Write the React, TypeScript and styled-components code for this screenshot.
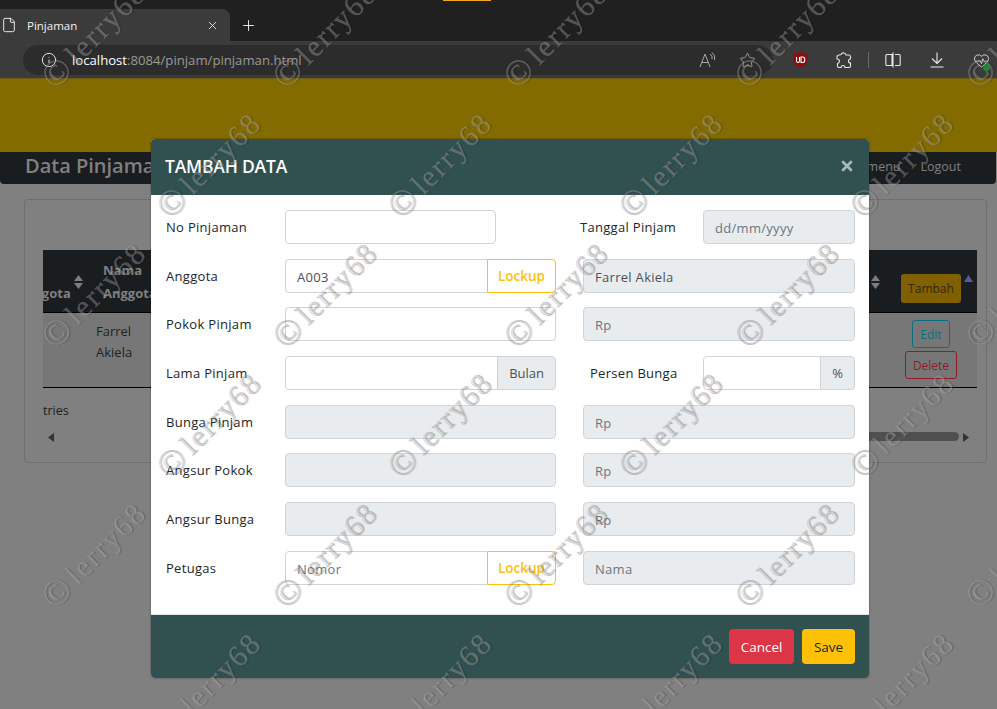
import React from 'react';
import styled, { createGlobalStyle } from 'styled-components';
import { File, HeartPulse, Info, Plus, Star, X } from 'lucide-react';

const GlobalStyle = createGlobalStyle`
  html, body {
    margin: 0;
    padding: 0;
    width: 997px;
    height: 709px;
    overflow: hidden;
    background: #808080;
    font-family: "Open Sans", "Liberation Sans", sans-serif;
  }
  * { box-sizing: border-box; }
`;

const Screen = styled.div`
  position: relative;
  width: 997px;
  height: 709px;
  overflow: hidden;
`;

/* browser chrome */
const TabStrip = styled.div`
  height: 41px;
  background: #202020;
  display: flex;
  align-items: flex-end;
  position: relative;
`;

const TopMark = styled.div`
  position: absolute;
  left: 443px;
  top: 0;
  width: 48px;
  height: 1px;
  background: #f0a818;
`;

const Tab = styled.div`
  width: 230px;
  height: 32px;
  background: #3b3b3b;
  border-radius: 0 8px 0 0;
  display: flex;
  align-items: center;
  padding: 0 11px 0 1px;
  color: #f2f2f2;
  font-size: 11.5px;
  gap: 10px;
  span { flex: 1; }
`;

const NewTab = styled.div`
  width: 36px;
  height: 32px;
  display: flex;
  align-items: center;
  justify-content: center;
  color: #f2f2f2;
`;

const Toolbar = styled.div`
  height: 37px;
  background: #3b3b3b;
  display: flex;
  align-items: flex-start;
  padding-top: 4px;
`;

const Address = styled.div`
  margin-left: 23px;
  width: 750px;
  height: 30px;
  background: #2c2c2c;
  border-radius: 15px;
  display: flex;
  align-items: center;
  padding-left: 18px;
  gap: 15px;
  font-size: 13.15px;
  b { font-weight: 400; color: #fff; }
  em { font-style: normal; color: #9a9a9a; }
  svg { color: #e4e4e4; }
`;

const ToolIcons = styled.div`
  position: absolute;
  top: 41px;
  left: 0;
  width: 997px;
  height: 37px;
  pointer-events: none;
`;

const ToolIcon = styled.div<{ $x: number }>`
  position: absolute;
  top: 10px;
  left: ${(p) => p.$x}px;
  width: 18px;
  height: 18px;
  color: #e4e4e4;
  display: flex;
  align-items: center;
  justify-content: center;
`;

const Divider = styled.div`
  position: absolute;
  left: 868px;
  top: 11px;
  width: 1px;
  height: 16px;
  background: #6a6a6a;
`;

const StatusDot = styled.div`
  position: absolute;
  right: 0;
  bottom: -2px;
  width: 7px;
  height: 7px;
  border-radius: 50%;
  background: #1f8a2c;
`;

/* dimmed page behind the dialog */
const Page = styled.div`
  height: 631px;
  background: #808080;
  color: #1c1c1c;
`;

const Banner = styled.div`
  height: 74px;
  background: #836b00;
  border-top: 1px solid #6e5c10;
`;

const Navbar = styled.div`
  height: 32px;
  margin-right: 1px;
  background: #1a1d20;
  border-radius: 0 0 4px 4px;
  display: flex;
  align-items: center;
  justify-content: space-between;
  padding: 0 35px 4px 25px;
  color: #808080;
`;

const Brand = styled.div`
  font-size: 20px;
  font-weight: 600;
  margin-top: -2px;
`;

const NavLinks = styled.div`
  display: flex;
  gap: 20px;
  font-size: 12.5px;
`;

const Card = styled.div`
  margin: 15px 10px 0 24px;
  height: 264px;
  border: 1px solid #6f6f6f;
  border-radius: 4px;
  padding: 50px 9px 0 18px;
`;

const TableFrame = styled.div`
  overflow: hidden;
  border-bottom: 1px solid #000;
`;

const HeadRow = styled.div`
  height: 63px;
  background: #1a1d20;
  border-bottom: 1px solid #000;
  display: flex;
  align-items: center;
  color: #808080;
  font-size: 13px;
  font-weight: 700;
  position: relative;
`;

const HeadCell = styled.div<{ $w: number; $ml?: number }>`
  width: ${(p) => p.$w}px;
  margin-left: ${(p) => p.$ml ?? 0}px;
  flex: none;
  line-height: 23px;
  padding-top: 1px;
  white-space: nowrap;
`;

const SortMark = styled.svg<{ $x: number }>`
  position: absolute;
  left: ${(p) => p.$x}px;
  top: 25px;
`;

const SortedMark = styled.svg`
  position: absolute;
  left: 921px;
  top: 25px;
`;

const TambahButton = styled.div`
  position: absolute;
  left: 858px;
  top: 24px;
  width: 60px;
  height: 29px;
  border-radius: 3px;
  background: #806000;
  color: #33280a;
  font-size: 12px;
  font-weight: 400;
  display: flex;
  align-items: center;
  justify-content: center;
`;

const BodyRow = styled.div`
  height: 74px;
  background: #777;
  position: relative;
  display: flex;
  padding: 8px 0 0 53px;
  font-size: 13px;
  line-height: 21px;
  color: #222;
`;

const RowButton = styled.div<{ $color: string; $x: number; $y: number; $w: number }>`
  position: absolute;
  left: ${(p) => p.$x}px;
  top: ${(p) => p.$y}px;
  width: ${(p) => p.$w}px;
  height: 28px;
  border: 1px solid ${(p) => p.$color};
  border-radius: 3px;
  color: ${(p) => p.$color};
  font-size: 12px;
  display: flex;
  align-items: center;
  justify-content: center;
`;

const Entries = styled.div`
  font-size: 12.5px;
  margin-top: 14px;
`;

const Scroll = styled.div`
  margin-top: 8px;
  height: 20px;
  display: flex;
  align-items: center;
  justify-content: space-between;
  padding: 0 8px 0 5px;
`;

const Thumb = styled.div`
  position: absolute;
  left: 840px;
  top: 432px;
  width: 119px;
  height: 9px;
  border-radius: 5px;
  background: #505050;
`;

/* dialog */
const Modal = styled.div`
  position: absolute;
  left: 151px;
  top: 139px;
  width: 718px;
  height: 539px;
  border-radius: 4px;
  overflow: hidden;
  background: #fff;
  display: flex;
  flex-direction: column;
  box-shadow: 0 0 2px rgba(0, 0, 0, 0.5);
`;

const ModalHeader = styled.div`
  height: 56px;
  flex: none;
  background: #315050;
  color: #fff;
  display: flex;
  align-items: center;
  justify-content: space-between;
  padding: 0 14px 2px 14px;
`;

const ModalTitle = styled.div`
  font-size: 17.5px;
  font-weight: 600;
  letter-spacing: -0.2px;
`;

const CloseMark = styled.div`
  color: #a7b8b8;
  display: flex;
`;

const ModalBody = styled.div`
  flex: 1;
  padding: 15px 14px 0 15px;
  display: flex;
  flex-direction: column;
  gap: 14.7px;
`;

const FormRow = styled.div`
  display: flex;
  height: 34px;
  align-items: center;
`;

const Label = styled.label<{ $w?: number; $pad?: number }>`
  width: ${(p) => p.$w ?? 119}px;
  padding-left: ${(p) => p.$pad ?? 0}px;
  flex: none;
  font-size: 13px;
  letter-spacing: 0.3px;
  color: #212529;
`;

const FieldGroup = styled.div<{ $w: number; $ml?: number }>`
  width: ${(p) => p.$w}px;
  margin-left: ${(p) => p.$ml ?? 0}px;
  height: 34px;
  flex: none;
  display: flex;
`;

const Field = styled.div<{ $off?: boolean; $joined?: boolean }>`
  flex: 1;
  height: 34px;
  border: 1px solid #ced4da;
  border-radius: ${(p) => (p.$joined ? '4px 0 0 4px' : '4px')};
  background: ${(p) => (p.$off ? '#e9ecef' : '#fff')};
  padding: 2px 11px 0;
  font-size: 13px;
  letter-spacing: 0.3px;
  color: #6c757d;
  display: flex;
  align-items: center;
`;

const Value = styled.span`
  color: #495057;
`;

const Addon = styled.div`
  height: 34px;
  margin-left: -1px;
  padding: 0 11px;
  border: 1px solid #ced4da;
  border-radius: 0 4px 4px 0;
  background: #e9ecef;
  color: #495057;
  font-size: 13px;
  display: flex;
  align-items: center;
`;

const LockupButton = styled.div`
  width: 69px;
  height: 34px;
  margin-left: -1px;
  border: 1px solid #ffc107;
  border-radius: 0 4px 4px 0;
  background: #fff;
  color: #ffc107;
  font-size: 13.5px;
  font-weight: 600;
  display: flex;
  align-items: center;
  justify-content: center;
`;

const ModalFooter = styled.div`
  height: 64px;
  flex: none;
  background: #315050;
  border-top: 1px solid #dee2e6;
  display: flex;
  align-items: center;
  justify-content: flex-end;
  gap: 8px;
  padding: 0 14px 0 0;
`;

const FooterButton = styled.div<{ $bg: string; $fg: string; $w: number }>`
  width: ${(p) => p.$w}px;
  height: 35px;
  border-radius: 4px;
  background: ${(p) => p.$bg};
  color: ${(p) => p.$fg};
  font-size: 13.5px;
  display: flex;
  align-items: center;
  justify-content: center;
`;

/* watermark */
const Watermark = styled.div`
  position: absolute;
  inset: 0;
  overflow: hidden;
  pointer-events: none;
  padding-top: 65px;
`;

const StampRow = styled.div<{ $shift: number }>`
  height: 130px;
  display: flex;
  margin-left: ${(p) => p.$shift}px;
`;

const Stamp = styled.div`
  width: 231px;
  flex: none;
  height: 30px;
  line-height: 30px;
  transform: rotate(-45deg);
  transform-origin: 0 50%;
  white-space: nowrap;
  font-family: "Liberation Serif", serif;
  font-size: 30px;
  letter-spacing: 2px;
  word-spacing: -4px;
  color: rgba(225, 225, 225, 0.3);
  -webkit-text-stroke: 0.5px rgba(110, 110, 110, 0.4);
  text-shadow: 1px 1px 1px rgba(0, 0, 0, 0.2);
`;

const StampCircle = styled.span`
  font-size: 36px;
  letter-spacing: 0;
  vertical-align: -2px;
  margin-left: -3px;
`;

function SortIcon({ x }: { x: number }) {
  return (
    <SortMark $x={x} width="9" height="14" viewBox="0 0 9 14" fill="#7d7d7d">
      <path d="M4.5 0 L9 6 H0 Z M0 8 H9 L4.5 14 Z" />
    </SortMark>
  );
}

function ReadAloud() {
  return (
    <svg width="18" height="16" viewBox="0 0 18 16" fill="none" stroke="#a8a8a8" strokeWidth="1">
      <path d="M1 15 L6 2 L11 15 M3 10.5 H9" />
      <path d="M11 2 Q14 4 13 7 M13 0.5 Q17 3.5 15.5 8" />
    </svg>
  );
}

function UblockShield() {
  return (
    <svg width="15" height="16" viewBox="0 0 15 16">
      <path d="M0.5 2 L7.5 0 L14.5 2 V9 Q14 13 7.5 16 Q1 13 0.5 9 Z" fill="#8a0f12" />
      <path d="M3.5 5 V9 Q3.5 10.5 5 10.5 Q6.5 10.5 6.5 9 V5 M8 5 V10.5 H9.5 Q11.8 10.5 11.8 7.7 Q11.8 5 9.5 5 Z" fill="none" stroke="#fff" strokeWidth="1.1" />
    </svg>
  );
}

function Extensions() {
  return (
    <svg width="16" height="17" viewBox="0 0 16 17" fill="none" stroke="#e8e8e8" strokeWidth="1.1">
      <path d="M5 2.5 Q6 0.5 8 1 Q10 1.5 10 3 H13 Q14.5 3 14.5 5 V7 Q12.5 7 12.5 9 Q12.5 11 14.5 11 V14 Q14.5 15.5 13 15.5 H9 Q9 13.5 7 13.5 Q5.5 13.5 5 15.5 H3 Q1.5 15.5 1.5 14 V11.5 Q3.5 11 3.5 9 Q3.5 7 1 7 V5 Q1 3 3 3 Z" />
    </svg>
  );
}

function SplitScreen() {
  return (
    <svg width="16" height="16" viewBox="0 0 16 16" fill="none" stroke="#e8e8e8" strokeWidth="1.1">
      <path d="M7 2.5 H2 Q0.8 2.5 0.8 3.8 V12.2 Q0.8 13.5 2 13.5 H7 Z M8 0.5 V15.5 M10 2.5 H14 Q15.2 2.5 15.2 3.8 V12.2 Q15.2 13.5 14 13.5 H10" />
    </svg>
  );
}

function DownloadArrow() {
  return (
    <svg width="14" height="16" viewBox="0 0 14 16" fill="none" stroke="#e8e8e8" strokeWidth="1.1">
      <path d="M7 0.5 V11 M2 6.5 L7 11.5 L12 6.5 M0.5 15 H13.5" />
    </svg>
  );
}

const stampRows = [
  { shift: 49, count: 5 },
  { shift: 164, count: 4 },
  { shift: 49, count: 5 },
  { shift: 164, count: 4 },
  { shift: 49, count: 5 },
  { shift: 164, count: 4 },
];

const plainRows = ['Bunga Pinjam', 'Angsur Pokok', 'Angsur Bunga'];

export default function App() {
  return (
    <Screen>
      <GlobalStyle />
      <TabStrip>
        <TopMark />
        <Tab>
          <File size={16} strokeWidth={1.4} />
          <span>Pinjaman</span>
          <X size={13} strokeWidth={1.6} />
        </Tab>
        <NewTab>
          <Plus size={17} strokeWidth={1.3} />
        </NewTab>
      </TabStrip>
      <Toolbar>
        <Address>
          <Info size={16} strokeWidth={1.5} />
          <div>
            <b>localhost</b>
            <em>:8084/pinjam/pinjaman.html</em>
          </div>
        </Address>
      </Toolbar>
      <ToolIcons>
        <ToolIcon $x={699}>
          <ReadAloud />
        </ToolIcon>
        <ToolIcon $x={738}>
          <Star size={17} strokeWidth={1.1} color="#b4b4b4" />
        </ToolIcon>
        <ToolIcon $x={791}>
          <UblockShield />
        </ToolIcon>
        <ToolIcon $x={835}>
          <Extensions />
        </ToolIcon>
        <Divider />
        <ToolIcon $x={884}>
          <SplitScreen />
        </ToolIcon>
        <ToolIcon $x={928}>
          <DownloadArrow />
        </ToolIcon>
        <ToolIcon $x={972}>
          <HeartPulse size={17} strokeWidth={1.2} />
          <StatusDot />
        </ToolIcon>
      </ToolIcons>

      <Page>
        <Banner />
        <Navbar>
          <Brand>Data Pinjaman</Brand>
          <NavLinks>
            <span>menu</span>
            <span>Logout</span>
          </NavLinks>
        </Navbar>
        <Card>
          <TableFrame>
            <HeadRow>
              <HeadCell $w={60} $ml={-26}>
                <br />
                Anggota
              </HeadCell>
              <HeadCell $w={120} $ml={26}>
                Nama
                <br />
                Anggota
              </HeadCell>
              <SortIcon x={31} />
              <SortIcon x={828} />
              <TambahButton>Tambah</TambahButton>
              <SortedMark width="9" height="7" viewBox="0 0 9 7">
                <path d="M4.5 0 L9 7 H0 Z" fill="#5a5a9a" />
              </SortedMark>
            </HeadRow>
            <BodyRow>
              <div>
                Farrel
                <br />
                Akiela
              </div>
              <RowButton $color="#0b6f80" $x={869} $y={7} $w={38}>
                Edit
              </RowButton>
              <RowButton $color="#8e1c29" $x={862} $y={38} $w={52}>
                Delete
              </RowButton>
            </BodyRow>
          </TableFrame>
          <Entries>tries</Entries>
          <Scroll>
            <svg width="6" height="9" viewBox="0 0 6 9">
              <path d="M6 0 V9 L0 4.5 Z" fill="#333" />
            </svg>
            <svg width="6" height="9" viewBox="0 0 6 9">
              <path d="M0 0 V9 L6 4.5 Z" fill="#333" />
            </svg>
          </Scroll>
        </Card>
      </Page>
      <Thumb />

      <Modal>
        <ModalHeader>
          <ModalTitle>TAMBAH DATA</ModalTitle>
          <CloseMark>
            <X size={16} strokeWidth={4} />
          </CloseMark>
        </ModalHeader>
        <ModalBody>
          <FormRow>
            <Label>No Pinjaman</Label>
            <FieldGroup $w={211}>
              <Field />
            </FieldGroup>
            <Label $w={207} $pad={84}>
              Tanggal Pinjam
            </Label>
            <FieldGroup $w={152}>
              <Field $off>dd/mm/yyyy</Field>
            </FieldGroup>
          </FormRow>
          <FormRow>
            <Label>Anggota</Label>
            <FieldGroup $w={271}>
              <Field $joined>
                <Value>A003</Value>
              </Field>
              <LockupButton>Lockup</LockupButton>
            </FieldGroup>
            <FieldGroup $w={272} $ml={27}>
              <Field $off>
                <Value>Farrel Akiela</Value>
              </Field>
            </FieldGroup>
          </FormRow>
          <FormRow>
            <Label>Pokok Pinjam</Label>
            <FieldGroup $w={271}>
              <Field />
            </FieldGroup>
            <FieldGroup $w={272} $ml={27}>
              <Field $off>Rp</Field>
            </FieldGroup>
          </FormRow>
          <FormRow>
            <Label>Lama Pinjam</Label>
            <FieldGroup $w={271}>
              <Field $joined />
              <Addon>Bulan</Addon>
            </FieldGroup>
            <Label $w={147} $pad={34}>
              Persen Bunga
            </Label>
            <FieldGroup $w={152}>
              <Field $joined />
              <Addon>%</Addon>
            </FieldGroup>
          </FormRow>
          {plainRows.map((name) => (
            <FormRow key={name}>
              <Label>{name}</Label>
              <FieldGroup $w={271}>
                <Field $off />
              </FieldGroup>
              <FieldGroup $w={272} $ml={27}>
                <Field $off>Rp</Field>
              </FieldGroup>
            </FormRow>
          ))}
          <FormRow>
            <Label>Petugas</Label>
            <FieldGroup $w={271}>
              <Field $joined>Nomor</Field>
              <LockupButton>Lockup</LockupButton>
            </FieldGroup>
            <FieldGroup $w={272} $ml={27}>
              <Field $off>Nama</Field>
            </FieldGroup>
          </FormRow>
        </ModalBody>
        <ModalFooter>
          <FooterButton $bg="#dc3545" $fg="#fff" $w={65}>
            Cancel
          </FooterButton>
          <FooterButton $bg="#ffc107" $fg="#212529" $w={53}>
            Save
          </FooterButton>
        </ModalFooter>
      </Modal>

      <Watermark>
        {stampRows.map((row, i) => (
          <StampRow key={i} $shift={row.shift}>
            {Array.from({ length: row.count }).map((_, j) => (
              <Stamp key={j}>
                <StampCircle>©</StampCircle> lerry68
              </Stamp>
            ))}
          </StampRow>
        ))}
      </Watermark>
    </Screen>
  );
}
